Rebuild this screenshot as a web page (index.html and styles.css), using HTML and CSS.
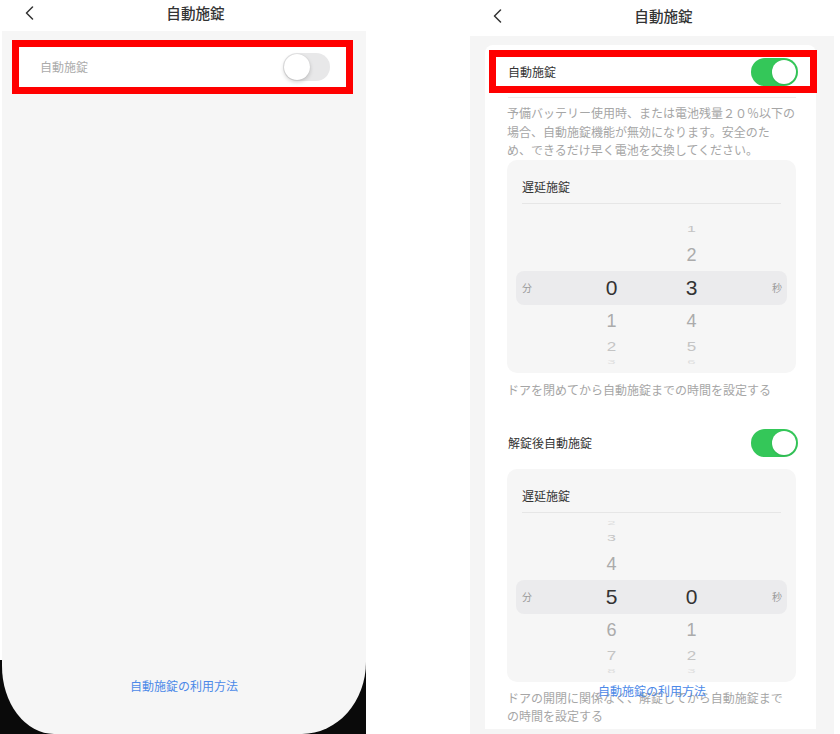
FILE: index.html
```html
<!DOCTYPE html>
<html lang="ja">
<head>
    <meta charset="UTF-8">
    <title>自動施錠</title>
    <link rel="stylesheet" href="styles.css">
</head>
<body>
    <div class="page">

        <!-- Auto lock switched off -->
        <div class="phone phoneOff">
            <div class="screen">
                <div class="header headerOff">
                    <svg class="back" width="9" height="14" viewBox="0 0 9 14"><path d="M7.5 1 L1.5 7 L7.5 13" /></svg>
                    <p class="title">自動施錠</p>
                </div>
                <div class="bodyOff">
                    <div class="mark rowOff">
                        <span class="label labelOff">自動施錠</span>
                        <span class="switch"><span class="knob"></span></span>
                    </div>
                    <a class="howto">自動施錠の利用方法</a>
                </div>
            </div>
        </div>

        <!-- Auto lock switched on -->
        <div class="phone phoneOn">
            <div class="header headerOn">
                <svg class="back" width="9" height="14" viewBox="0 0 9 14"><path d="M7.5 1 L1.5 7 L7.5 13" /></svg>
                <p class="title">自動施錠</p>
            </div>
            <div class="bodyOn">
                <div class="card">
                    <div class="mark rowOn">
                        <span class="label">自動施錠</span>
                        <span class="switch on"><span class="knob"></span></span>
                    </div>
                    <div class="line"></div>
                    <p class="note">予備バッテリー使用時、または電池残量２０％以下の<br>場合、自動施錠機能が無効になります。安全のた<br>め、できるだけ早く電池を交換してください。</p>

                    <div class="picker">
                        <p class="pickerTitle">遅延施錠</p>
                        <div class="pickerLine"></div>
                        <div class="wheel">
                            <div class="wrow w3 up"><span></span><span class="num"></span><span class="num"></span><span></span></div>
                            <div class="wrow w2 up"><span></span><span class="num"></span><span class="num">1</span><span></span></div>
                            <div class="wrow w1"><span></span><span class="num"></span><span class="num">2</span><span></span></div>
                            <div class="wrow sel"><span class="unit">分</span><span class="num">0</span><span class="num">3</span><span class="unit unitR">秒</span></div>
                            <div class="wrow w1"><span></span><span class="num">1</span><span class="num">4</span><span></span></div>
                            <div class="wrow w2"><span></span><span class="num">2</span><span class="num">5</span><span></span></div>
                            <div class="wrow w3"><span></span><span class="num">3</span><span class="num">6</span><span></span></div>
                        </div>
                    </div>
                    <p class="note caption">ドアを閉めてから自動施錠までの時間を設定する</p>

                    <div class="row rowAfter">
                        <span class="label">解錠後自動施錠</span>
                        <span class="switch on"><span class="knob"></span></span>
                    </div>

                    <div class="picker picker2">
                        <p class="pickerTitle">遅延施錠</p>
                        <div class="pickerLine"></div>
                        <div class="wheel">
                            <div class="wrow w3 up"><span></span><span class="num">2</span><span class="num"></span><span></span></div>
                            <div class="wrow w2 up"><span></span><span class="num">3</span><span class="num"></span><span></span></div>
                            <div class="wrow w1"><span></span><span class="num">4</span><span class="num"></span><span></span></div>
                            <div class="wrow sel"><span class="unit">分</span><span class="num">5</span><span class="num">0</span><span class="unit unitR">秒</span></div>
                            <div class="wrow w1"><span></span><span class="num">6</span><span class="num">1</span><span></span></div>
                            <div class="wrow w2"><span></span><span class="num">7</span><span class="num">2</span><span></span></div>
                            <div class="wrow w3"><span></span><span class="num">8</span><span class="num">3</span><span></span></div>
                        </div>
                    </div>
                    <p class="note caption2">ドアの開閉に関係なく、解錠してから自動施錠まで<br>の時間を設定する</p>
                </div>
            </div>
            <a class="howto howtoFloat">自動施錠の利用方法</a>
        </div>

    </div>
</body>
</html>
```

FILE: styles.css
```css
* {
    margin: 0;
    padding: 0;
    box-sizing: border-box;
}

body {
    background-color: #fff;
    color: #333;
    font-family: "Noto Sans CJK JP", "Noto Sans", sans-serif;
}

.page {
    display: flex;
    gap: 104px;
    height: 734px;
    overflow: hidden;
}

.phone {
    width: 366px;
    height: 734px;
}

/* left phone: black corners under the rounded screen */
.phoneOff {
    padding-left: 2px;
    background: linear-gradient(#fff 0 660px, #0a0a0a 660px);
}

.screen {
    display: flex;
    flex-direction: column;
    width: 364px;
    height: 734px;
    background-color: #f6f6f6;
    border-bottom-left-radius: 52px 68px;
    border-bottom-right-radius: 64px 72px;
    overflow: hidden;
}

.phoneOn {
    width: 364px;
    position: relative;
    display: flex;
    flex-direction: column;
    background-color: #f5f5f5;
}

.header {
    display: grid;
    grid-template-columns: 1fr auto 1fr;
    align-items: center;
    background-color: #fff;
    padding-left: 23px;
}

.headerOff {
    height: 31px;
    padding-bottom: 6px;
}

.headerOn {
    height: 36px;
    padding-bottom: 4px;
}

.back {
    fill: none;
    stroke: #333;
    stroke-width: 1.5;
    stroke-linecap: round;
    stroke-linejoin: round;
}

.title {
    font-size: 14.6px;
    font-weight: 500;
    line-height: 20px;
    color: #333;
}

.bodyOff {
    flex: 1;
    display: flex;
    flex-direction: column;
    padding: 9px 0 39px;
}

/* red frame around the main switch row */
.mark {
    display: flex;
    align-items: center;
    justify-content: space-between;
    background-color: #fff;
    border: 7px solid #f00;
}

.rowOff {
    height: 54px;
    margin: 0 13px 0 10px;
    padding: 0 16px 0 21px;
}

.label {
    font-size: 12px;
    line-height: 18px;
    color: #333;
}

.labelOff {
    color: #ababab;
}

.switch {
    display: flex;
    align-items: center;
    width: 47px;
    height: 28px;
    padding: 1px;
    border-radius: 14px;
    background-color: #e8e8e9;
}

.knob {
    width: 26px;
    height: 26px;
    border-radius: 50%;
    background-color: #fff;
    box-shadow: 0 2px 4px rgba(0,0,0,0.18), 0 0 1px rgba(0,0,0,0.15);
}

.switch.on {
    justify-content: flex-end;
    padding: 2px;
    background-color: #34c759;
}

.switch.on .knob {
    width: 24px;
    height: 24px;
    box-shadow: 0 1px 2px rgba(0,0,0,0.1);
}

.howto {
    display: block;
    margin-top: auto;
    font-size: 12px;
    line-height: 18px;
    text-align: center;
    color: #4c89e8;
}

.howtoFloat {
    position: absolute;
    left: 0;
    right: 0;
    bottom: 34px;
}

.bodyOn {
    flex: 1;
    padding: 9px 18px 0 15px;
}

.card {
    background-color: #fff;
    border-radius: 8px 8px 0 0;
    padding: 5px 20px 3px 22px;
}

.rowOn {
    height: 43px;
    margin: 0 -21px 0 -18px;
    padding: 0 12px;
}

.line {
    height: 1px;
    margin: 4px 0 0 1px;
    background-color: #ececec;
}

.note {
    margin-top: 6px;
    font-size: 12px;
    line-height: 18.5px;
    color: #a6a6a6;
}

.caption {
    margin-top: 8px;
}

.caption2 {
    margin-top: 7px;
}

.row {
    display: flex;
    align-items: center;
    justify-content: space-between;
}

.rowAfter {
    height: 44px;
    margin: 21.5px -2px 0 1px;
}

.picker {
    padding: 18px 15px 6px;
    background-color: #f6f6f6;
    border-radius: 10px;
}

.picker2 {
    margin-top: 4px;
}

.pickerTitle {
    font-size: 12px;
    line-height: 18px;
    color: #333;
}

.pickerLine {
    height: 1px;
    margin-top: 7px;
    background-color: #e6e6e6;
}

.wheel {
    margin: 5px -6px 0 -6px;
}

.wrow {
    display: grid;
    grid-template-columns: 1fr 80px 80px 1fr;
    align-items: center;
    overflow: hidden;
    font-family: "Liberation Sans", Arial, sans-serif;
}

.num {
    display: block;
    text-align: center;
}

.sel {
    height: 34px;
    border-radius: 8px;
    background-color: #ebebed;
    font-size: 21px;
    line-height: 34px;
    color: #333;
}

.w1 {
    height: 32px;
    font-size: 18px;
    line-height: 32px;
    color: #ababab;
}

.w2 {
    height: 20px;
    font-size: 17px;
    line-height: 20px;
    color: #c4c4c4;
}

.w2 .num {
    transform: scaleY(0.78);
}

.w2.up .num {
    font-size: 16px;
    transform: scaleY(0.62);
}

.w3 {
    height: 10px;
    font-size: 15px;
    line-height: 10px;
    color: #dedede;
}

.w3 .num {
    transform: scaleY(0.32);
}

.unit {
    padding-left: 6px;
    font-family: "Noto Sans CJK JP", sans-serif;
    font-size: 10px;
    line-height: 14px;
    color: #9a9a9a;
}

.unitR {
    padding: 0 5px 0 0;
    text-align: right;
}
```
